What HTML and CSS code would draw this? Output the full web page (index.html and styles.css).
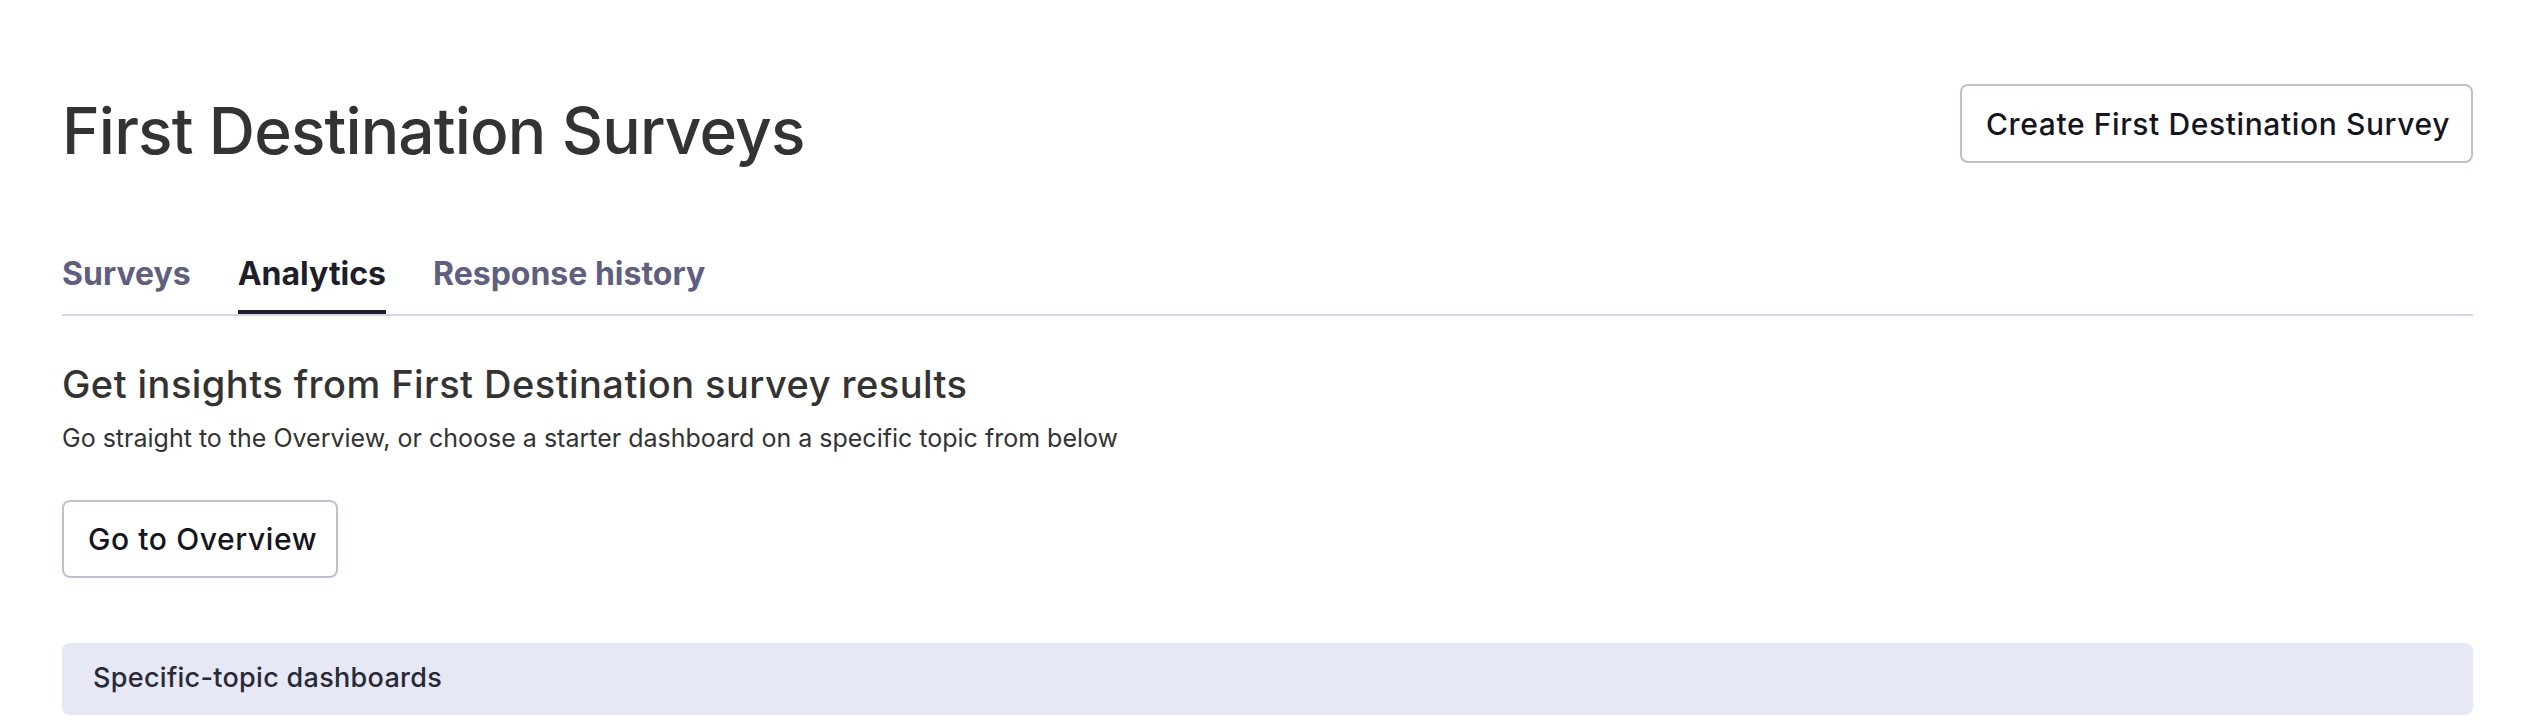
FILE: index.html
```html
<!DOCTYPE html>
<html lang="en">
<head>
<meta charset="utf-8">
<title>First Destination Surveys</title>
<link rel="stylesheet" href="styles.css">
</head>
<body>
<main class="page">
  <header class="page-header">
    <h1 class="page-title">First Destination Surveys</h1>
    <button class="btn btn-create" type="button">Create First Destination Survey</button>
  </header>
  <nav class="tabs">
    <a class="tab" href="#">Surveys</a>
    <a class="tab tab-active" href="#">Analytics</a>
    <a class="tab" href="#">Response history</a>
  </nav>
  <section class="insights">
    <h2 class="insights-title">Get insights from First Destination survey results</h2>
    <p class="insights-text">Go straight to the Overview, or choose a starter dashboard on a specific topic from below</p>
    <button class="btn btn-overview" type="button">Go to Overview</button>
  </section>
  <section class="topic-bar">
    <span class="topic-label">Specific-topic dashboards</span>
  </section>
</main>
</body>
</html>
```
FILE: styles.css
```css
html, body {
  margin: 0;
  padding: 0;
  background: #ffffff;
}
body {
  font-family: Inter, "Noto Sans", "Liberation Sans", sans-serif;
  color: #333333;
}
.page {
  padding: 0 63px 0 62px;
}
.page-header {
  display: flex;
  justify-content: space-between;
  align-items: flex-start;
  padding-top: 84px;
}
.page-title {
  margin: 15px 0 0 0;
  font-size: 64px;
  line-height: 64px;
  font-weight: 500;
  color: #333333;
  letter-spacing: -0.85px;
}
.btn {
  box-sizing: border-box;
  display: block;
  white-space: nowrap;
  font-family: Inter, "Noto Sans", "Liberation Sans", sans-serif;
  font-size: 30px;
  line-height: 36px;
  font-weight: 500;
  color: #15151f;
  background: #ffffff;
  border: 2px solid #bdbfd3;
  border-radius: 8px;
  padding: 19px 24px;
  letter-spacing: 0.6px;
  cursor: pointer;
}
.btn-create {
  height: 79px;
  width: 513px;
}
.tabs {
  display: flex;
  gap: 47px;
  margin-top: 91px;
  border-bottom: 2px solid #d3d6e9;
}
.tab {
  font-size: 32px;
  line-height: 40px;
  font-weight: 700;
  color: #5f607f;
  text-decoration: none;
  padding-bottom: 16px;
  border-bottom: 4px solid transparent;
}
.tab-active {
  color: #1e1e2b;
  border-bottom-color: #1e1e2b;
}
.insights {
  padding-top: 46px;
}
.insights-title {
  margin: 0;
  font-size: 38px;
  line-height: 44px;
  font-weight: 500;
  color: #333333;
  letter-spacing: 0.45px;
}
.insights-text {
  margin: 16px 0 0 0;
  font-size: 25px;
  line-height: 32px;
  font-weight: 400;
  color: #333333;
}
.btn-overview {
  margin-top: 46px;
  height: 78px;
  width: 276px;
}
.topic-bar {
  margin-top: 65px;
  background: #e6e8f5;
  border-radius: 8px;
  padding: 19px 31px 21px;
}
.topic-label {
  font-size: 27px;
  line-height: 32px;
  font-weight: 500;
  color: #2a2a36;
  letter-spacing: 0.3px;
}
```
